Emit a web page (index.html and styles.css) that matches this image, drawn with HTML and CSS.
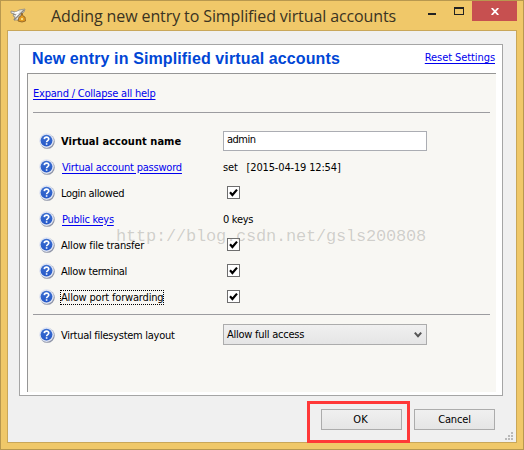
FILE: index.html
```html
<!DOCTYPE html>
<html lang="en">
<head>
<meta charset="utf-8">
<title>Adding new entry to Simplified virtual accounts</title>
<link rel="stylesheet" href="styles.css">
</head>
<body>
<svg width="0" height="0" class="defs">
  <defs>
    <linearGradient id="blue" x1="0" y1="0" x2="0" y2="1"><stop offset="0" stop-color="#3c6fd0"/><stop offset="1" stop-color="#2558c8"/></linearGradient>
    <symbol id="help" viewBox="0 0 16 16">
      <circle cx="8.3" cy="8.4" r="7.4" fill="#8d93a6"/>
      <circle cx="7.6" cy="7.6" r="7.3" fill="#dde3f2"/>
      <circle cx="7.5" cy="7.6" r="5.9" fill="url(#blue)"/>
      <path d="M5.3 6.1c.1-2.6 4.5-2.6 4.5 0 0 1.5-2.2 1.4-2.2 3.1M7.6 10.2v1.6" fill="none" stroke="#fff" stroke-width="1.6"/>
    </symbol>
    <symbol id="check" viewBox="0 0 13 13">
      <rect x=".5" y=".5" width="12" height="12" fill="#fff" stroke="#6e6e6e"/>
      <path d="M3 6.3 5.4 9 10 3.6" fill="none" stroke="#000" stroke-width="2.2"/>
    </symbol>
  </defs>
</svg>
<div class="window">
  <header class="titlebar">
    <svg class="appicon" width="17" height="16" viewBox="0 0 17 16">
      <path d="M1 3 6 4 9 2 15 1 14 4 11 6 11 9 8 12 4 12 5 9 3 8 4 6 1 5Z" fill="#e4e4e0" stroke="#8d897f" stroke-width=".8"/>
      <path d="M4 12 14 2M3 6 9 8" stroke="#8b887f" stroke-width="1.300" fill="none"/>
      <path d="M5 5 9 4M6 8 8 6" stroke="#fff" stroke-width="1.500"/>
      <path d="M9 9 11 8 12 5 13 8 15 9 15.500 13 12 14 8 13Z" fill="#e39b20" stroke="#855b22" stroke-width=".8"/>
      <path d="M11 11h2" stroke="#fff0a0" stroke-width="1.500"/>
    </svg>
    <h1 class="title">Adding new entry to Simplified virtual accounts</h1>
    <div class="controls">
      <span class="min"></span><span class="max"></span>
      <span class="close"><svg width="8" height="7" viewBox="0 0 8 7"><path d="M.7 0 7.300 7M7.300 0 .7 7" stroke="#fff" stroke-width="1.800"/></svg></span>
    </div>
  </header>
  <main class="client">
    <section class="sheet">
      <div class="head"><h2 class="heading">New entry in Simplified virtual accounts</h2><a class="link reset">Reset Settings</a></div>
      <div class="panel">
        <div class="expand"><a class="link exp">Expand / Collapse all help</a></div>
        <div class="rows">
          <div class="row"><svg class="help"><use href="#help"/></svg><div class="label"><b class="t-name">Virtual account name</b></div><div class="input t-admin">admin</div></div>
          <div class="row"><svg class="help"><use href="#help"/></svg><div class="label lk"><a class="link t-pass">Virtual account password</a></div><div class="label t-set">set&nbsp;&nbsp; [2015-04-19 12:54]</div></div>
          <div class="row"><svg class="help"><use href="#help"/></svg><div class="label t-login">Login allowed</div><svg class="check"><use href="#check"/></svg></div>
          <div class="row"><svg class="help"><use href="#help"/></svg><div class="label lk"><a class="link t-pub">Public keys</a></div><div class="label t-keys">0 keys</div></div>
          <div class="row"><svg class="help"><use href="#help"/></svg><div class="label t-file">Allow file transfer</div><svg class="check"><use href="#check"/></svg></div>
          <div class="row"><svg class="help"><use href="#help"/></svg><div class="label t-term">Allow terminal</div><svg class="check"><use href="#check"/></svg></div>
          <div class="row"><svg class="help"><use href="#help"/></svg><div class="label"><span class="focus t-port">Allow port forwarding</span></div><svg class="check"><use href="#check"/></svg></div>
        </div>
        <div class="row last"><svg class="help"><use href="#help"/></svg><div class="label t-vfs">Virtual filesystem layout</div>
          <div class="select"><span class="t-full">Allow full access</span><svg width="8" height="6" viewBox="0 0 8 6"><path d="M.8.7 4 4.200 7.200.7" fill="none" stroke="#555" stroke-width="2"/></svg></div></div>
      </div>
    </section>
    <footer class="buttons"><div class="button t-ok">OK</div><div class="button t-cancel">Cancel</div></footer>
    <svg class="grip" width="8" height="8" viewBox="0 0 8 8"><path d="M6 0h2v2H6zM3 3h2v2H3zM6 3h2v2H6zM0 6h2v2H0zM3 6h2v2H3zM6 6h2v2H6z" fill="#b9b9b9"/></svg>
  </main>
  <div class="highlight"></div>
  <div class="watermark">http://blog.csdn.net/gsls200808</div>
</div>
</body>
</html>
```

FILE: styles.css
```css
* { box-sizing: border-box; }
body { margin: 0; font: 11px/14px "DejaVu Sans Condensed", "DejaVu Sans", sans-serif; font-stretch: condensed; color: #000; }
.defs { position: absolute; }
.window { position: relative; width: 524px; height: 450px; background: #f0c869; border: 1px solid #b8984f; padding: 0 6px; white-space: nowrap; overflow: hidden; }
.titlebar { height: 29px; display: flex; align-items: flex-start; }
.appicon { margin: 7px 0 0 3px; flex: none; }
.title { margin: 3px 0 0 24px; font: 16px/24px "Open Sans", "Noto Sans", sans-serif; color: #3a3322; width: 345px; letter-spacing: -.11px; }
.controls { margin-left: auto; display: flex; margin-right: 0; }
.min { width: 8px; height: 2px; background: #222; margin: 12px 18px 0 0; }
.max { width: 10px; height: 8px; border: 1px solid #222; border-top-width: 2px; margin: 6px 8px 0 0; }
.close { width: 45px; height: 20px; background: #c75050; display: flex; align-items: center; justify-content: center; }
.client { height: 413px; border: 1px solid #c9a75a; background: #f0f0f0; padding: 13px 13px 0 11px; position: relative; }
.sheet { height: 352px; border: 1px solid #a5a5a5; background: #fff; padding: 0 6px 0 7px; }
.head { height: 28px; display: flex; justify-content: space-between; }
.heading { margin: 4px 0 0 5px; font: bold 16px/20px "Liberation Sans", Arial, sans-serif; color: #0046d5; letter-spacing: .12px; }
.link { color: #0000ee; text-decoration: underline; text-underline-offset: 2px; }
.reset { margin: 6px 1px 0 0; letter-spacing: -.08px; }
.panel { height: 319px; background: #f8f7f3; border-left: 1px solid #969696; border-top: 1px solid #969696; padding: 0 6px 0 5px; }
.expand { height: 39px; padding: 13px 0 0; border-bottom: 1px solid #9c9c9f; }
.rows { padding-top: 15px; height: 202px; border-bottom: 1px solid #9c9c9f; }
.row { display: grid; grid-template-columns: 28px 162px 204px; align-items: center; height: 26px; }
.label { padding-top: 1px; }
.help { width: 16px; height: 16px; margin: 0 0 1px 6px; }
.check { width: 13px; height: 13px; margin: 0 0 2px 4px; }
.label.lk { padding-left: 1px; }
.input { height: 20px; border: 1px solid #abadb3; background: #fff; padding: 1px 3px; }
.focus { outline: 1px dotted #000; }
.last { margin-top: 7px; }
.exp { letter-spacing: -.21px; }
.t-name { letter-spacing: .05px; }
.t-admin { letter-spacing: -.5px; }
.t-pass { letter-spacing: -.21px; }
.t-set { letter-spacing: -.16px; }
.t-login { letter-spacing: -.37px; }
.t-pub { letter-spacing: -.28px; }
.t-keys { letter-spacing: -.3px; }
.t-file { letter-spacing: -.2px; }
.t-term { letter-spacing: -.35px; }
.t-port { letter-spacing: -.18px; }
.t-vfs { letter-spacing: -.27px; }
.t-full { letter-spacing: -.25px; }
.t-cancel { letter-spacing: -.15px; }
.t-ok { padding-right: 2px; }
.select { height: 21px; border: 1px solid #acacac; background: linear-gradient(#f0f0f0, #e5e5e5); display: flex; align-items: center; justify-content: space-between; padding: 0 4px 0 3px; margin-bottom: 1px; }
.buttons { display: flex; justify-content: flex-end; gap: 12px; padding: 13px 8px 0 0; }
.button { width: 81px; height: 21px; border: 1px solid #acacac; background: linear-gradient(#f0f0f0, #e5e5e5); text-align: center; line-height: 20px; }
.grip { position: absolute; right: 3px; bottom: 2px; }
.highlight { position: absolute; left: 306px; top: 400px; width: 103px; height: 42px; border: 3px solid #ff3838; }
.watermark { position: absolute; left: 115px; top: 225px; font: 17px/22px "Liberation Mono", monospace; color: rgba(120,120,115,.33); letter-spacing: -.2px; }
```
